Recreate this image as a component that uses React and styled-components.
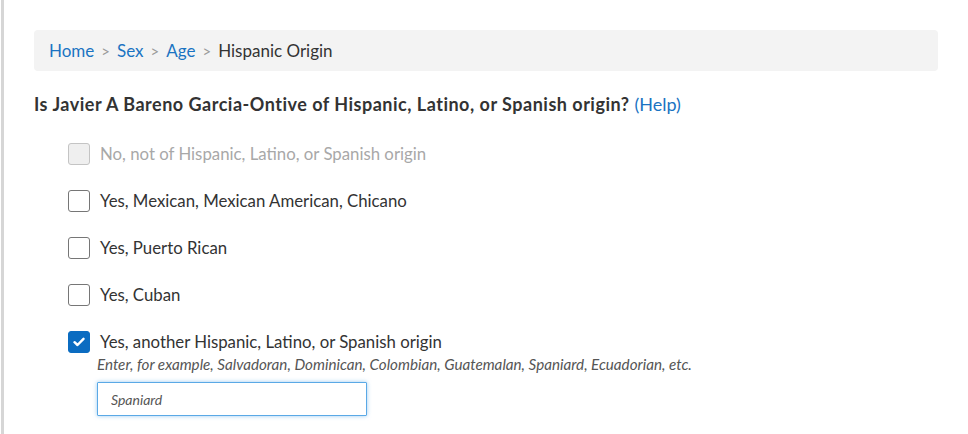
import styled, { createGlobalStyle } from "styled-components";

const Global = createGlobalStyle`
  html, body {
    margin: 0;
    padding: 0;
    background: #fff;
  }
  body {
    font-family: 'Lato', 'Noto Sans', sans-serif;
    color: #333;
  }
`

const Frame = styled.div`
  margin-left: 1px;
  border-left: 3px solid #d6d6d6;
  min-height: 434px;
  box-sizing: border-box;
  padding: 30px 30px 0 30px;
`

const Crumbs = styled.nav`
  height: 41px;
  background: #f3f3f3;
  border-radius: 4px;
  display: flex;
  align-items: center;
  padding: 0 15px;
  font-size: 17px;
`

const Crumb = styled.a`
  color: ${p => (p.$current ? "#333" : "#1a73c2")};
  text-decoration: none;
`

const Sep = styled.span`
  color: #9a9a9a;
  margin: 0 7px;
  font-size: 15px;
`

const Question = styled.h2`
  margin: 21px 0 0;
  font-size: 18px;
  letter-spacing: 0.5px;
  line-height: 24px;
  font-weight: 700;
  color: #333;
`

const Help = styled.a`
  color: #1a73c2;
  font-weight: 400;
  letter-spacing: 0;
  text-decoration: none;
  margin-left: 5px;
`

const Options = styled.ul`
  list-style: none;
  margin: 14px 0 0;
  padding: 0 0 0 34px;
`

const Option = styled.li`
  display: flex;
  align-items: center;
  height: 47px;
  gap: 10px;
  font-size: 16.8px;
  color: ${p => (p.$disabled ? "#a8a8a8" : "#333")};
`

const Box = styled.span`
  width: 22px;
  height: 22px;
  box-sizing: border-box;
  border-radius: 3px;
  border: 1px solid ${p => (p.$checked ? "#0b6cc1" : p.$disabled ? "#c4c4c4" : "#767676")};
  background: ${p => (p.$checked ? "#0b6cc1" : p.$disabled ? "#efefef" : "#fff")};
  display: flex;
  align-items: center;
  justify-content: center;
  flex: none;
`

const Other = styled.div`
  padding-left: 29px;
  margin-top: -10px;
`

const Hint = styled.div`
  font-style: italic;
  font-size: 15.2px;
  color: #555;
  line-height: 18px;
`

const Field = styled.input`
  margin-top: 9px;
  width: 270px;
  height: 34px;
  box-sizing: border-box;
  border: 1px solid #5aa9e6;
  box-shadow: 0 0 4px rgba(90, 169, 230, 0.6);
  border-radius: 1px;
  padding: 0 13px;
  font-family: 'Lato', sans-serif;
  font-style: italic;
  font-size: 14px;
  color: #555;
  outline: none;
`

function Check({ checked, disabled }) {
  return (
    <Box $checked={checked} $disabled={disabled}>
      {checked && (
        <svg width="12" height="10" viewBox="0 0 12 10">
          <path d="M1.5 5.2 L4.5 8 L10.5 1.8" fill="none" stroke="#fff" strokeWidth="2.4" strokeLinecap="round" strokeLinejoin="round" />
        </svg>
      )}
    </Box>
  )
}

const choices = [
  { label: "No, not of Hispanic, Latino, or Spanish origin", disabled: true },
  { label: "Yes, Mexican, Mexican American, Chicano" },
  { label: "Yes, Puerto Rican" },
  { label: "Yes, Cuban" },
  { label: "Yes, another Hispanic, Latino, or Spanish origin", checked: true },
]

export default function App() {
  return (
    <>
      <Global />
      <Frame>
        <Crumbs>
          <Crumb href="#">Home</Crumb>
          <Sep>&gt;</Sep>
          <Crumb href="#">Sex</Crumb>
          <Sep>&gt;</Sep>
          <Crumb href="#">Age</Crumb>
          <Sep>&gt;</Sep>
          <Crumb $current>Hispanic Origin</Crumb>
        </Crumbs>
        <Question>
          Is Javier A Bareno Garcia-Ontive of Hispanic, Latino, or Spanish origin?
          <Help href="#">(Help)</Help>
        </Question>
        <Options>
          {choices.map(c => (
            <Option key={c.label} $disabled={c.disabled}>
              <Check checked={c.checked} disabled={c.disabled} />
              {c.label}
            </Option>
          ))}
          <Other>
            <Hint>Enter, for example, Salvadoran, Dominican, Colombian, Guatemalan, Spaniard, Ecuadorian, etc.</Hint>
            <Field defaultValue="Spaniard" />
          </Other>
        </Options>
      </Frame>
    </>
  )
}
